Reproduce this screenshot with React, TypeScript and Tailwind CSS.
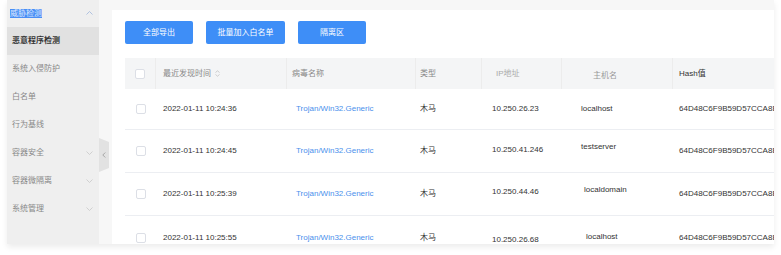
import React from "react";

const font = { fontFamily: '"Liberation Sans", "Noto Sans CJK SC", sans-serif' };

const Chevron = ({ up, color }: { up?: boolean; color: string }) => (
  <svg width="7" height="4" viewBox="0 0 7 4" className="shrink-0">
    <path d={up ? "M0.5 3.5 L3.5 0.5 L6.5 3.5" : "M0.5 0.5 L3.5 3.5 L6.5 0.5"} fill="none" stroke={color} strokeWidth="0.8" />
  </svg>
);

const Checkbox = () => (
  <div className="w-[10px] h-[10px] rounded-[2px] border border-[#dcdfe6] bg-white" />
);

const rows = [
  { time: "2022-01-11 10:24:36", ip: "10.250.26.23", ipCls: "pl-[10px]", host: "localhost", hostCls: "pl-[19px]", h: "h-[41px]" },
  { time: "2022-01-11 10:24:45", ip: "10.250.41.246", ipCls: "pl-[10px] mt-[-2px]", host: "testserver", hostCls: "pl-[19px] mt-[-8px]", h: "h-[43px]" },
  { time: "2022-01-11 10:25:39", ip: "10.250.44.46", ipCls: "pl-[10px] mt-[-4px]", host: "localdomain", hostCls: "pl-[22px] mt-[-8px]", h: "h-[43px]" },
  { time: "2022-01-11 10:25:55", ip: "10.250.26.68", ipCls: "pl-[10px] mt-[4px]", host: "localhost", hostCls: "pl-[24px] mt-[-2px]", h: "h-[43px]" },
];

const side = [
  { label: "系统入侵防护" },
  { label: "白名单" },
  { label: "行为基线" },
  { label: "容器安全", chev: true },
  { label: "容器微隔离", chev: true },
  { label: "系统管理", chev: true },
];

export default function App() {
  return (
    <div className="w-[781px] h-[255px] bg-white overflow-hidden" style={font}>
      <div className="ml-[7px] w-[767px] h-[244px] flex overflow-hidden shadow-[0_3px_6px_rgba(0,0,0,0.08)]">
        {/* Sidebar */}
        <div className="w-[92px] shrink-0 bg-[#efefef] flex flex-col text-[8px] text-[#888]">
          <div className="h-[28px] mt-[-1px] flex items-center pl-[3px] pr-[6px] justify-between">
            <span className="bg-[#4a8ef5] text-[#dbe8ff] px-[0px] leading-[9px]">威胁检测</span>
            <Chevron up color="#9fb6dc" />
          </div>
          <div className="h-[28px] flex items-center pl-[5px] bg-[#e1e1e1] text-[#333] font-bold">恶意程序检测</div>
          {side.map((s) => (
            <div key={s.label} className="h-[28px] flex items-center pl-[5px] pr-[6px] justify-between">
              <span>{s.label}</span>
              {s.chev && <Chevron color="#c8c8c8" />}
            </div>
          ))}
        </div>

        {/* Content */}
        <div className="flex-1 bg-[#f7f7f7] pl-[13px] pt-[10px] relative flex">
          <div className="absolute left-0 top-[138px] w-[10px] h-[34px] bg-[#e2e2e2] [clip-path:polygon(0_0,100%_12%,100%_88%,0_100%)] flex items-center justify-center">
            <svg width="4" height="6" viewBox="0 0 4 6">
              <path d="M3.3 0.5 L0.8 3 L3.3 5.5" fill="none" stroke="#999" strokeWidth="0.8" />
            </svg>
          </div>

          <div className="flex-1 bg-white pl-[13px] pt-[11px] overflow-hidden">
            <div className="flex gap-[13px]">
              <div className="w-[68px] h-[23px] rounded-[2px] bg-[#3e8ef7] text-white text-[8px] flex items-center justify-center">全部导出</div>
              <div className="w-[79px] h-[23px] rounded-[2px] bg-[#3e8ef7] text-white text-[8px] flex items-center justify-center">批量加入白名单</div>
              <div className="w-[68px] h-[23px] rounded-[2px] bg-[#3e8ef7] text-white text-[8px] flex items-center justify-center">隔离区</div>
            </div>

            <div className="mt-[14px] w-[700px] text-[8px]">
              {/* header */}
              <div className="h-[31px] bg-[#f4f5f6] flex items-center text-[#888]">
                <div className="w-[31px] h-full flex items-center justify-center border-r border-[#ececec]"><Checkbox /></div>
                <div className="w-[131px] h-full flex items-center pl-[7px] border-r border-[#ececec] gap-[4px]">
                  <span>最近发现时间</span>
                  <svg width="5" height="7" viewBox="0 0 5 7">
                    <path d="M0.5 2.5 L2.5 0.8 L4.5 2.5" fill="none" stroke="#bbb" strokeWidth="0.7" />
                    <path d="M0.5 4.5 L2.5 6.2 L4.5 4.5" fill="none" stroke="#bbb" strokeWidth="0.7" />
                  </svg>
                </div>
                <div className="w-[129px] h-full flex items-center pl-[5px] border-r border-[#ececec]">病毒名称</div>
                <div className="w-[66px] h-full flex items-center pl-[4px] border-r border-[#ececec]">类型</div>
                <div className="w-[80px] h-full flex items-center pl-[14px] border-r border-[#ececec] text-[#aaa]">IP地址</div>
                <div className="w-[111px] h-full flex items-center pl-[31px] pt-[4px] border-r border-[#ececec] text-[#999]">主机名</div>
                <div className="flex-1 h-full flex items-center pl-[6px] text-[#333]">Hash值</div>
              </div>
              {rows.map((r, i) => (
                <div key={i} className={`${r.h} flex items-center text-[#333] ${i < rows.length - 1 ? "border-b border-[#eceef2]" : ""}`}>
                  <div className="w-[31px] flex items-center justify-center"><Checkbox /></div>
                  <div className="w-[131px] pl-[7px]">{r.time}</div>
                  <div className="w-[129px] pl-[9px] text-[#4a90ec]">Trojan/Win32.Generic</div>
                  <div className="w-[66px] pl-[4px]">木马</div>
                  <div className={`w-[80px] ${r.ipCls}`}>{r.ip}</div>
                  <div className={`w-[111px] ${r.hostCls}`}>{r.host}</div>
                  <div className="flex-1 pl-[6px] whitespace-nowrap">64D48C6F9B59D57CCA8E2C1F</div>
                </div>
              ))}
            </div>
          </div>
        </div>
      </div>
    </div>
  );
}
